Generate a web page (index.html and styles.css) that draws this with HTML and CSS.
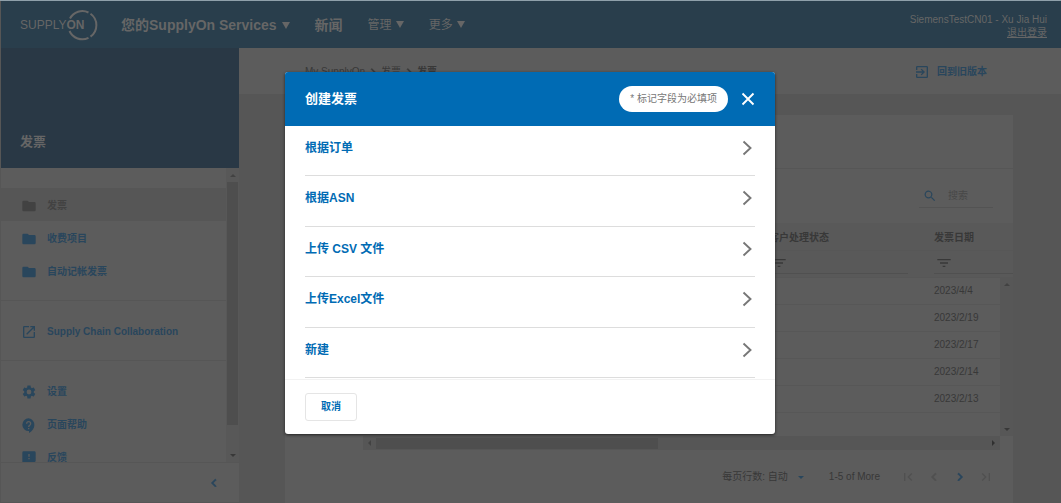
FILE: index.html
```html
<!DOCTYPE html>
<html lang="zh-CN">
<head>
<meta charset="utf-8">
<title>创建发票</title>
<link rel="stylesheet" href="styles.css">
</head>
<body>
<svg class="defs" aria-hidden="true">
  <symbol id="folder" viewBox="0 0 24 24"><path d="M10 4H4a2 2 0 0 0-2 2v12a2 2 0 0 0 2 2h16a2 2 0 0 0 2-2V8a2 2 0 0 0-2-2h-8z"/></symbol>
  <symbol id="filter" viewBox="0 0 24 24"><path d="M10 18h4v-2h-4zM2 6v2h20V6zm4 7h12v-2H6z"/></symbol>
  <symbol id="chev" viewBox="0 0 24 24"><path d="M8.600 16.600 13.200 12 8.600 7.400 10 6l6 6-6 6z" stroke="currentColor" stroke-width="1"/></symbol>
  <symbol id="go" viewBox="0 0 16 16"><path d="M4.500 1.500 11.500 8 4.500 14.500" fill="none" stroke="currentColor" stroke-width="1.900"/></symbol>
</svg>
<div class="app">
  <header class="topbar">
    <svg class="logo" viewBox="0 0 80 32" role="img" aria-label="SupplyOn">
      <g fill="none" stroke="currentColor" stroke-width="2"><path d="M50 9.500A14 14 0 0 1 68.500 3.500M70.500 4.800A14 14 0 0 1 70.500 27.600M68.500 28.800A14 14 0 0 1 49.500 22"/></g>
      <text x="0" y="20" font-size="12">SUPPLY<tspan font-weight="700">ON</tspan></text>
    </svg>
    <nav class="mainnav">
      <a href="#" class="strong">您的SupplyOn Services <span class="tri"></span></a>
      <a href="#" class="strong">新闻</a>
      <a href="#">管理 <span class="tri"></span></a>
      <a href="#">更多 <span class="tri"></span></a>
    </nav>
    <div class="user"><span>SiemensTestCN01 - Xu Jia Hui</span><a href="#">退出登录</a></div>
  </header>
  <div class="body">
    <aside class="side">
      <h1>发票</h1>
      <div class="sidescroll">
        <nav class="menu">
          <div class="group first">
            <a href="#" class="current"><svg><use href="#folder"/></svg>发票</a>
            <a href="#"><svg><use href="#folder"/></svg>收费项目</a>
            <a href="#"><svg><use href="#folder"/></svg>自动记帐发票</a>
          </div>
          <div class="group">
            <a href="#"><svg viewBox="0 0 24 24"><path d="M19 19H5V5h7V3H5a2 2 0 0 0-2 2v14a2 2 0 0 0 2 2h14a2 2 0 0 0 2-2v-7h-2zM14 3v2h3.600l-9.800 9.800 1.400 1.400L19 6.400V10h2V3z"/></svg>Supply Chain Collaboration</a>
          </div>
          <div class="group">
            <a href="#"><svg viewBox="0 0 24 24"><path d="M19.140 12.940c.04-.3.060-.61.060-.94s-.02-.64-.07-.94l2.030-1.580a.49.49 0 0 0 .12-.61l-1.920-3.320a.49.49 0 0 0-.59-.22l-2.390.96a7 7 0 0 0-1.620-.94l-.36-2.540a.48.48 0 0 0-.48-.41h-3.840a.48.48 0 0 0-.47.41l-.36 2.540a7.300 7.300 0 0 0-1.620.94l-2.390-.96a.48.48 0 0 0-.59.22L2.740 8.870a.47.47 0 0 0 .12.61l2.030 1.580a6 6 0 0 0 0 1.880l-2.030 1.580a.49.49 0 0 0-.12.61l1.920 3.320c.12.22.37.29.59.22l2.390-.96c.5.380 1.030.7 1.620.94l.36 2.540c.05.24.24.41.48.41h3.840c.24 0 .44-.17.470-.41l.36-2.540a7.300 7.300 0 0 0 1.620-.94l2.390.96c.22.080.47 0 .59-.22l1.920-3.320a.47.47 0 0 0-.12-.61zM12 15.600a3.600 3.600 0 1 1 0-7.200 3.600 3.600 0 0 1 0 7.200z"/></svg>设置</a>
            <a href="#"><svg viewBox="0 0 24 24"><path d="M11.500 2a9.500 9.500 0 0 0 0 19h.5v3c4.860-2.340 8-7 8-11.500A9.500 9.500 0 0 0 11.500 2zm1 16.500h-2v-2h2zm0-3.500h-2c0-3.250 3-3 3-5a2 2 0 0 0-4 0h-2a4 4 0 0 1 8 0c0 2.500-3 2.750-3 5z"/></svg>页面帮助</a>
            <a href="#"><svg viewBox="0 0 24 24"><path d="M20 2H4a2 2 0 0 0-2 2v18l4-4h14a2 2 0 0 0 2-2V4a2 2 0 0 0-2-2zm-7 12h-2v-2h2zm0-4h-2V6h2z"/></svg>反馈</a>
          </div>
        </nav>
        <div class="vbar"><span class="up"></span><i></i><span class="down"></span></div>
      </div>
      <div class="sidefoot"><button type="button" aria-label="收起"><svg class="flip"><use href="#chev"/></svg></button></div>
    </aside>
    <main class="main">
      <div class="crumbs">
        <nav>My SupplyOn<svg><use href="#chev"/></svg>发票<svg><use href="#chev"/></svg><b>发票</b></nav>
        <a href="#"><svg viewBox="0 0 24 24"><path d="M10.090 15.590 11.500 17l5-5-5-5-1.410 1.410L12.670 11H3v2h9.670zM19 3H5a2 2 0 0 0-2 2v4h2V5h14v14H5v-4H3v4a2 2 0 0 0 2 2h14a2 2 0 0 0 2-2V5a2 2 0 0 0-2-2z"/></svg>回到旧版本</a>
      </div>
      <section class="card">
        <div class="cardtop"></div>
        <div class="tools">
          <label class="search"><svg viewBox="2 2 20 20"><path d="M15.500 14h-.79l-.28-.27A6.500 6.500 0 1 0 13.730 14.430l.27.28v.79l5 5L20.500 19zm-6 0a4.500 4.500 0 1 1 0-9 4.500 4.500 0 0 1 0 9z"/></svg><input type="search" placeholder="搜索" aria-label="搜索"></label>
        </div>
        <div class="grid">
          <table>
            <thead>
              <tr><th>客户处理状态</th><th class="date">发票日期</th></tr>
              <tr class="filters"><td><span><svg><use href="#filter"/></svg></span></td><td class="date"><span><svg><use href="#filter"/></svg></span></td></tr>
            </thead>
            <tbody>
              <tr><td></td><td class="date">2023/4/4</td></tr>
              <tr><td></td><td class="date">2023/2/19</td></tr>
              <tr><td></td><td class="date">2023/2/17</td></tr>
              <tr><td></td><td class="date">2023/2/14</td></tr>
              <tr><td></td><td class="date">2023/2/13</td></tr>
            </tbody>
          </table>
          <div class="gridbar"><span class="up"></span><span class="down"></span></div>
        </div>
        <div class="hbar"><span class="left"></span><i></i><span class="right"></span></div>
        <div class="pager">
          <span>每页行数: 自动</span><span class="down blue"></span>
          <span class="range">1-5 of More</span>
          <button type="button" disabled aria-label="首页"><svg viewBox="0 0 24 24"><path d="M18.400 16.600 13.800 12l4.600-4.600L17 6l-6 6 6 6zM6 6h2v12H6z"/></svg></button>
          <button type="button" disabled aria-label="上一页"><svg class="flip"><use href="#chev"/></svg></button>
          <button type="button" aria-label="下一页"><svg><use href="#chev"/></svg></button>
          <button type="button" disabled aria-label="末页"><svg viewBox="0 0 24 24"><path d="M5.600 7.400 10.200 12l-4.600 4.600L7 18l6-6-6-6zM16 6h2v12h-2z"/></svg></button>
        </div>
      </section>
    </main>
  </div>
</div>
<div class="layer">
  <div class="dialog" role="dialog" aria-modal="true" aria-labelledby="dlg">
    <header>
      <h2 id="dlg">创建发票</h2>
      <span class="pill">* 标记字段为必填项</span>
      <button type="button" class="close" aria-label="关闭"><svg viewBox="0 0 14 14"><path d="m1.500 1.500 11 11m0-11-11 11" fill="none" stroke="currentColor" stroke-width="1.900"/></svg></button>
    </header>
    <div class="options">
      <button type="button">根据订单<svg><use href="#go"/></svg></button>
      <button type="button">根据ASN<svg><use href="#go"/></svg></button>
      <button type="button">上传 CSV 文件<svg><use href="#go"/></svg></button>
      <button type="button">上传Excel文件<svg><use href="#go"/></svg></button>
      <button type="button">新建<svg><use href="#go"/></svg></button>
    </div>
    <footer><button type="button" class="cancel">取消</button></footer>
  </div>
</div>
</body>
</html>
```

FILE: styles.css
```css
* { box-sizing: border-box; }
html, body { height: 100%; }
body {
  margin: 0;
  overflow: hidden;
  background: #565656;
  color: #383838;
  font: 10px/16px "Liberation Sans", "Noto Sans CJK SC", sans-serif;
}
a { color: inherit; text-decoration: none; }
button, input { font: inherit; color: inherit; }
button { padding: 0; border: 0; background: none; }
svg { fill: currentColor; flex: none; }
.defs { position: absolute; width: 0; height: 0; }
.flip { transform: scaleX(-1); }

.app { display: flex; flex-direction: column; height: 100%; padding: 0 0 1px 1px; border-top: 1px solid #8fa0aa; }
.topbar { display: flex; align-items: center; height: 47px; flex: none; padding: 0 14px 0 19px; background: #293e4c; color: #666; }
.logo { width: 80px; height: 32px; margin-right: 21px; }
.mainnav { display: flex; align-items: center; gap: 25px; flex: 1; font-size: 12px; white-space: nowrap; }
.mainnav .strong { font-size: 14px; font-weight: 700; }
.tri, .down, .up, .left, .right { display: inline-block; border: 3px solid transparent; }
.tri { margin: 0 0 1px 1px; border-width: 7px 4px 0; border-top-color: #666; }
.down { border-width: 3px 3px 0; border-top-color: #383838; }
.up { border-width: 0 3px 3px; border-bottom-color: #424242; }
.left { border-width: 3px 3px 3px 0; border-right-color: #424242; }
.right { border-width: 3px 0 3px 3px; border-left-color: #303030; }
.blue { border-top-color: #29465c; }
.user { display: flex; flex-direction: column; align-items: flex-end; padding-top: 2px; line-height: 13px; }
.user a { text-decoration: underline; }

.body { display: flex; flex: 1; min-height: 0; }
.side { display: flex; flex-direction: column; width: 238px; flex: none; background: #5c5c5c; color: #29465c; }
.side h1 { height: 120px; flex: none; margin: 0; padding: 86px 19px 0; background: #293845; color: #666; font-size: 13px; line-height: 16px; }
.sidescroll { display: flex; flex: 1; min-height: 0; overflow: hidden; }
.menu { flex: 1; overflow: hidden; font-weight: 700; }
.group { padding: 13px 0; border-top: 1px solid #565656; }
.group.first { padding-top: 20px; border-top: 0; }
.menu a { display: flex; align-items: center; gap: 10px; height: 33px; padding: 2px 0 0 20px; }
.menu a svg { width: 16px; height: 16px; }
.menu .group a:last-child:not(:first-child) { height: 33px; }
.menu .current { background: #565656; color: #424242; }
.vbar { display: flex; flex-direction: column; align-items: center; justify-content: space-between; width: 13px; flex: none; padding: 6px 0 5px; background: #585858; }
.vbar i { width: 11px; flex: 1; margin: 5px 0 29px; background: #4e4e4e; }
.sidefoot { display: flex; justify-content: flex-end; align-items: center; height: 40px; flex: none; padding-right: 17px; border-top: 1px solid #565656; }
.sidefoot button, .sidefoot svg { display: block; width: 16px; height: 16px; }

.main { display: flex; flex-direction: column; flex: 1; min-width: 0; background: #565656; }
.crumbs { display: flex; justify-content: space-between; height: 46px; flex: none; padding: 16px 74px 0 66px; background: #5c5c5c; }
.crumbs nav, .crumbs a { display: flex; align-items: center; height: 16px; gap: 1px; }
.crumbs nav svg { width: 14px; height: 14px; }
.crumbs a { gap: 7px; color: #29465c; font-weight: 700; }
.crumbs a svg { width: 16px; height: 16px; }
.card { display: flex; flex-direction: column; flex: 1; margin: 21px 48px 0 46px; background: #5c5c5c; }
.cardtop { height: 54px; flex: none; border-bottom: 1px solid #565656; }
.tools { display: flex; justify-content: flex-end; height: 54px; flex: none; padding: 15px 20px 0 0; }
.search { display: flex; align-items: center; gap: 12px; width: 74px; height: 24px; padding-left: 5px; border-bottom: 1px solid #535353; }
.search svg { width: 12px; height: 12px; color: #29465c; }
.search input { width: 40px; min-width: 0; padding: 0; border: 0; background: none; outline: 0; }
.search input::placeholder { color: #484848; }
.grid { display: flex; flex: none; height: 213px; position: relative; padding-left: 78px; }
table { width: 100%; height: 188px; table-layout: fixed; border-collapse: collapse; }
th, td { height: 27px; padding: 0; border-bottom: 1px solid #575757; text-align: left; }
thead { background: #595959; }
th { padding-top: 3px; }
th:first-child, td:first-child { padding-left: 406px; }
.date { width: 92px; padding-left: 13px; }
.filters span { display: block; padding: 1px 2px; height: 20px; border-bottom: 1px solid #505050; }
.filters td:first-child span { margin-right: 13px; }
.filters svg { display: block; width: 16px; height: 16px; }
.gridbar { position: absolute; top: 55px; right: 0; bottom: 0; width: 13px; display: flex; flex-direction: column; justify-content: space-between; align-items: center; padding: 5px 0; background: #575757; }
.hbar { display: flex; align-items: center; justify-content: space-between; height: 14px; flex: none; margin: 0 13px 0 78px; padding: 0 5px; background: #565656; }
.hbar i { width: 45%; height: 11px; margin: 0 auto 0 5px; background: #4e4e4e; }
.pager { display: flex; align-items: center; justify-content: flex-end; height: 54px; flex: none; padding-right: 19px; }
.pager .down { margin: 0 25px 0 10px; }
.range { margin-right: 10px; }
.pager button { margin-left: 10px; color: #29465c; }
.pager button:disabled { color: #505050; }
.pager button svg { display: block; width: 16px; height: 16px; }

.layer { position: absolute; inset: 0; display: flex; align-items: center; justify-content: center; padding: 2px 1px 0 0; }
.dialog { width: 490px; max-width: 90%; border-radius: 3px; overflow: hidden; background: #fff; color: #006bb4; box-shadow: 0 1px 3px #222; }
.dialog header { display: flex; align-items: center; height: 54px; padding: 0 20px; background: #006bb4; color: #fff; }
.dialog h2 { flex: 1; margin: 0; font-size: 13px; line-height: 20px; }
.pill { padding: 5px 11px; border-radius: 13px; background: #fff; color: #777; }
.close { margin-left: 13px; }
.close svg { display: block; width: 14px; height: 14px; }
.options { display: grid; grid-auto-rows: 1fr; height: 253px; padding: 0 20px; }
.options button { display: flex; align-items: flex-start; justify-content: space-between; padding-top: 13px; border-bottom: 1px solid #ddd; font-size: 12px; line-height: 18px; font-weight: 700; }
.options svg { width: 16px; height: 18px; }
.options svg { color: #777; }
.dialog footer { padding: 13px 20px; border-top: 1px solid #f2f2f2; }
.cancel { display: block; padding: 5px 15px; border: 1px solid #e5e5e5; border-radius: 3px; font-weight: 700; }
```
